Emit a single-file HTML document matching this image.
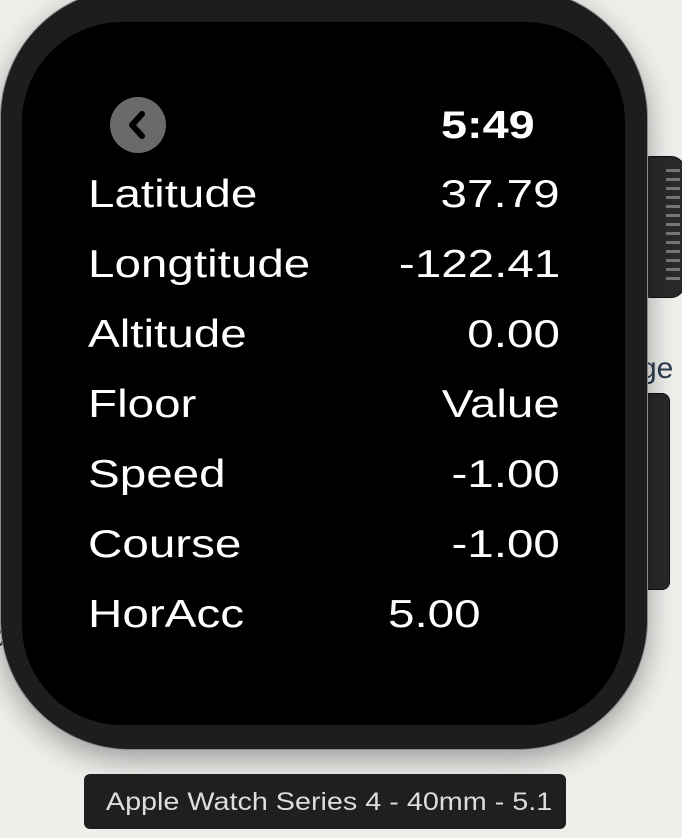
<!DOCTYPE html>
<html><head><style>
html,body{margin:0;padding:0;width:682px;height:838px;overflow:hidden;background:#efefec;font-family:"Liberation Sans",sans-serif;}
.bg{position:absolute;color:#2c3e50;font-size:30px;}
.body{position:absolute;left:0;top:-12px;width:648px;height:762px;background:#1d1d1d;border-radius:130px;box-shadow:0 10px 30px rgba(0,0,0,.35);border:1px solid #8a8a8a;box-sizing:border-box;}
.screen{position:absolute;left:22px;top:22px;width:603px;height:703px;background:#000;border-radius:100px;}
.crown{position:absolute;left:637px;top:156px;width:48px;height:142px;background:#2a2a2a;border-radius:14px;border:1px solid #111;box-sizing:border-box;}
.crown i{position:absolute;left:28px;width:14px;height:3px;background:#777;}
.btn{position:absolute;left:640px;top:393px;width:30px;height:197px;background:#2a2a2a;border-radius:0 8px 8px 0;border:1px solid #111;box-sizing:border-box;}
.t{position:absolute;color:#fff;font-size:39px;white-space:nowrap;line-height:1;transform:scaleX(1.22);transform-origin:left top;}
.v{right:122px;text-align:right;transform-origin:right top;}
.back{position:absolute;left:110px;top:97px;width:56px;height:56px;border-radius:50%;background:#6a6a6a;}
.label{position:absolute;left:84px;top:774px;width:482px;height:55px;background:#1f1f1f;border-radius:6px;color:#ddd;font-size:25px;text-align:center;line-height:57px;}
.label span{display:inline-block;transform:translateX(4px) scaleX(1.15);}
</style></head><body>
<div class="bg" style="left:-8px;top:88px">t</div>
<div class="bg" style="left:640px;top:352px">ge</div>
<div class="bg" style="left:-10px;top:620px">c</div>
<div class="crown"><i style="top:12px"></i><i style="top:21px"></i><i style="top:30px"></i><i style="top:39px"></i><i style="top:48px"></i><i style="top:57px"></i><i style="top:66px"></i><i style="top:75px"></i><i style="top:84px"></i><i style="top:93px"></i><i style="top:102px"></i><i style="top:111px"></i><i style="top:120px"></i></div>
<div class="btn"></div>
<div class="body"></div>
<div class="screen"></div>
<div class="back"><svg width="56" height="56"><path d="M32 17 L22 28 L32 39" stroke="#000" stroke-width="6" fill="none" stroke-linecap="round" stroke-linejoin="round"/></svg></div>
<div class="t" style="left:441px;top:106px;font-weight:bold;font-size:39px;transform:scaleX(1.2)">5:49</div>
<div class="t" style="left:88px;top:175px">Latitude</div><div class="t v" style="top:175px">37.79</div>
<div class="t" style="left:88px;top:245px">Longtitude</div><div class="t v" style="top:245px">-122.41</div>
<div class="t" style="left:88px;top:315px">Altitude</div><div class="t v" style="top:315px">0.00</div>
<div class="t" style="left:88px;top:385px">Floor</div><div class="t v" style="top:385px">Value</div>
<div class="t" style="left:88px;top:455px">Speed</div><div class="t v" style="top:455px">-1.00</div>
<div class="t" style="left:88px;top:525px">Course</div><div class="t v" style="top:525px">-1.00</div>
<div class="t" style="left:88px;top:595px">HorAcc</div><div class="t" style="left:388px;top:595px">5.00</div>
<div class="label"><span>Apple Watch Series 4 - 40mm - 5.1</span></div>
</body></html>
